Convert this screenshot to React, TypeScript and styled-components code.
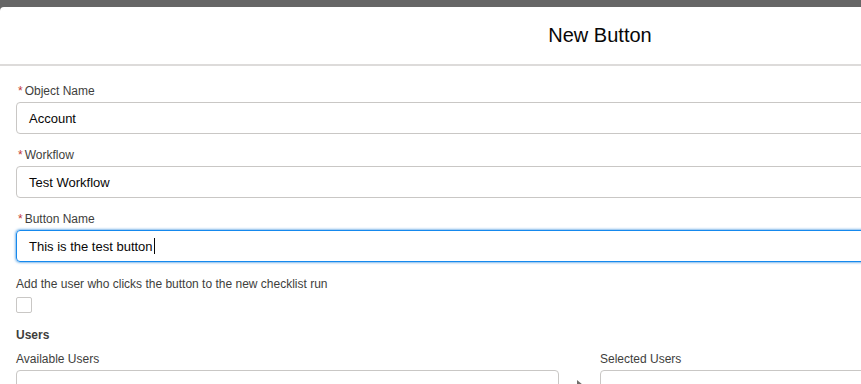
import styled, { createGlobalStyle } from 'styled-components';

const GlobalStyle = createGlobalStyle`
  html, body {
    margin: 0;
    padding: 0;
    background: #666666;
    overflow: hidden;
  }
  body {
    font-family: "Liberation Sans", Arial, sans-serif;
  }
`;

const Backdrop = styled.div`
  padding-top: 7px;
  height: 377px;
  overflow: hidden;
`;

const Modal = styled.div`
  width: 1200px;
  height: 100%;
  background: #ffffff;
  border-radius: 4px 4px 0 0;
`;

const Header = styled.header`
  height: 57px;
  display: flex;
  align-items: center;
  justify-content: center;
  border-bottom: 2px solid #dddbda;
`;

const Title = styled.h2`
  margin: 0;
  font-size: 20px;
  font-weight: 400;
  color: #080707;
`;

const Body = styled.div`
  padding: 16px 16px 0 16px;
  display: flex;
  flex-direction: column;
`;

const Field = styled.div`
  display: flex;
  flex-direction: column;
  margin-bottom: 12px;
`;

const Label = styled.label`
  font-size: 12px;
  line-height: 18px;
  color: #3e3e3c;
  margin-bottom: 2px;
`;

const Required = styled.abbr`
  color: #c23934;
  text-decoration: none;
  margin: 0 2px 0 2px;
`;

const Input = styled.div<{ $focused?: boolean }>`
  height: 32px;
  box-sizing: border-box;
  border: 1px solid ${({ $focused }) => ($focused ? '#1589ee' : '#c9c7c5')};
  box-shadow: ${({ $focused }) => ($focused ? '0 0 3px #0070d2' : 'none')};
  border-radius: 4px;
  padding: 0 12px;
  display: flex;
  align-items: center;
  font-size: 13px;
  color: #080707;
`;

const Caret = styled.span`
  display: inline-block;
  width: 1px;
  height: 16px;
  background: #080707;
  margin-left: 1px;
`;

const CheckField = styled.div`
  display: flex;
  flex-direction: column;
  margin-top: 1px;
`;

const Checkbox = styled.span`
  width: 16px;
  height: 16px;
  box-sizing: border-box;
  border: 1px solid #c9c7c5;
  border-radius: 2px;
  margin-top: 2px;
`;

const SectionTitle = styled.div`
  font-size: 12px;
  font-weight: 700;
  color: #3e3e3c;
  margin-top: 13px;
  line-height: 18px;
`;

const DualList = styled.div`
  display: flex;
  align-items: flex-start;
  margin-top: 6px;
`;

const ListColumn = styled.div<{ $width: number }>`
  width: ${({ $width }) => $width}px;
  display: flex;
  flex-direction: column;
`;

const ListBox = styled.div`
  height: 120px;
  box-sizing: border-box;
  border: 1px solid #c9c7c5;
  border-radius: 4px;
`;

const Arrows = styled.div`
  width: 41px;
  display: flex;
  justify-content: center;
  padding-top: 30px;
`;

export default function App() {
  return (
    <>
      <GlobalStyle />
      <Backdrop>
        <Modal>
          <Header>
            <Title>New Button</Title>
          </Header>
          <Body>
            <Field>
              <Label>
                <Required>*</Required>Object Name
              </Label>
              <Input>Account</Input>
            </Field>
            <Field>
              <Label>
                <Required>*</Required>Workflow
              </Label>
              <Input>Test Workflow</Input>
            </Field>
            <Field>
              <Label>
                <Required>*</Required>Button Name
              </Label>
              <Input $focused>
                This is the test button
                <Caret />
              </Input>
            </Field>
            <CheckField>
              <Label>Add the user who clicks the button to the new checklist run</Label>
              <Checkbox />
            </CheckField>
            <SectionTitle>Users</SectionTitle>
            <DualList>
              <ListColumn $width={543}>
                <Label>Available Users</Label>
                <ListBox />
              </ListColumn>
              <Arrows>
                <svg width="8" height="10" viewBox="0 0 8 10">
                  <path d="M1 0 L7 5 L1 10 Z" fill="#706e6b" />
                </svg>
              </Arrows>
              <ListColumn $width={560}>
                <Label>Selected Users</Label>
                <ListBox />
              </ListColumn>
            </DualList>
          </Body>
        </Modal>
      </Backdrop>
    </>
  );
}
